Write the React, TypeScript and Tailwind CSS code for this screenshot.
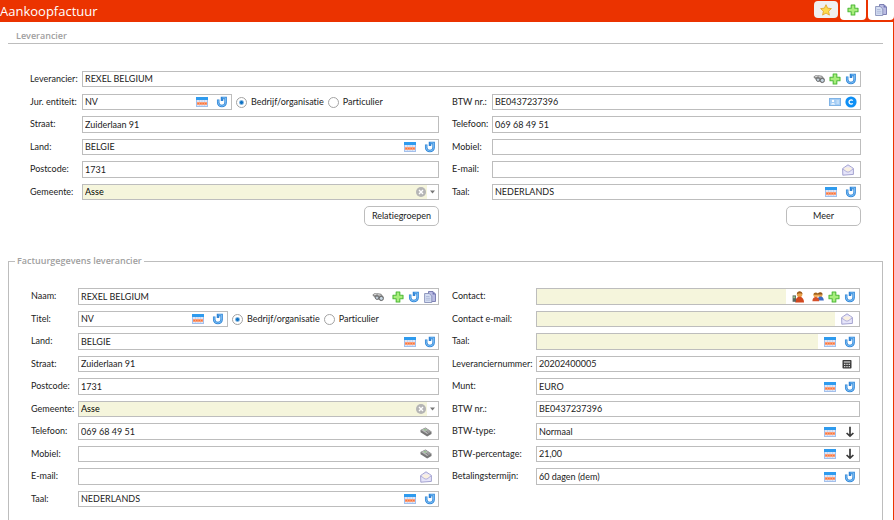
import clsx from "clsx";
import React, { ReactNode, useId } from "react";

type IconName =
  | "table"
  | "undo"
  | "plus"
  | "binoculars"
  | "card"
  | "circleC"
  | "mail"
  | "pages"
  | "phone"
  | "calculator"
  | "down"
  | "contact"
  | "people"
  | "star";

const icons: Record<IconName, ReactNode> = {
  table: (
    <>
      <rect x="0" y="1" width="12" height="10" fill="#a3c0ec" />
      <rect x="0" y="1" width="12" height="3" fill="#2f9bee" />
      <rect x="1" y="4" width="10" height="6" fill="#dbe7fa" />
      <path
        d="M3.5 4v6M6 4v6M8.5 4v6"
        stroke="#b9c9ea"
        strokeWidth="0.6"
        fill="none"
      />
      <rect x="1" y="6" width="10" height="3" fill="#fca07a" />
      <path d="M1.5 7.5h9" stroke="#f5763f" strokeDasharray="1.5 1" />
    </>
  ),
  undo: (
    <>
      <path
        d="M2.2 3.6V6.4a3.7 3.7 0 0 0 7.4 0V1.9H6V5"
        fill="none"
        stroke="#2f84d6"
        strokeWidth="2.5"
      />
      <path
        d="M2.2 4.2V6.4a3.7 3.7 0 0 0 7.4 0V1.9H6.4"
        fill="none"
        stroke="#7cc0f6"
        strokeWidth="1"
      />
    </>
  ),
  plus: (
    <path
      d="M4.2 1h3.6v3.2H11v3.6H7.8V11H4.2V7.8H1V4.2h3.2z"
      fill="#a8ee7c"
      stroke="#4fba38"
      strokeWidth="1.1"
      strokeLinejoin="round"
    />
  ),
  binoculars: (
    <>
      <path
        d="M0.3 4 2.4 2.2 6 2.2 9 2.8 11.8 6 11.4 9 9 10.2 6.8 8.8 4.6 8.8 2.6 6.6z"
        fill="#8a8a8a"
      />
      <circle cx="9.3" cy="7.4" r="2" fill="#c9d8e4" stroke="#5a5a5a" strokeWidth="0.8" />
      <circle cx="5" cy="6.7" r="1.7" fill="#c3d0da" stroke="#5a5a5a" strokeWidth="0.7" />
      <path d="M2 3.8 4.6 3.2M5.6 3.6 8.6 4.2" stroke="#e5e5e5" strokeWidth="0.9" />
    </>
  ),
  card: (
    <>
      <rect x="0.5" y="2.5" width="11" height="7" fill="#a4cdf5" stroke="#7fb3e6" />
      <circle cx="4" cy="4.9" r="1.2" fill="#fff" />
      <path d="M2 8.4c0-1.7 4-1.7 4 0z" fill="#fff" />
      <path d="M7.5 5H10M7.5 7H10" stroke="#e3f1fd" strokeWidth="0.9" />
    </>
  ),
  circleC: (
    <>
      <circle cx="6" cy="6" r="5.6" fill="#0d8ff5" />
      <path
        d="M7.7 4.6A2.1 2.1 0 1 0 7.7 7.4"
        fill="none"
        stroke="#fff"
        strokeWidth="1.3"
      />
    </>
  ),
  mail: (
    <>
      <path
        d="M0.6 4.6 6 0.8 11.4 4.4v6L0.8 11.2z"
        fill="#e6e5fa"
        stroke="#9b9acb"
        strokeWidth="0.9"
        strokeLinejoin="round"
      />
      <path d="M2.6 3.6h6.8v2.4L6 8 2.6 6.2z" fill="#f9f0e0" />
      <path d="M0.9 5.2 5 8h2l4.1-3" fill="none" stroke="#a6a5d2" strokeWidth="0.8" />
    </>
  ),
  pages: (
    <>
      <path d="M4.5 0.5H9L11.5 3v7.5h-7z" fill="#b9bbe2" stroke="#7376ad" strokeWidth="0.9" />
      <path d="M8.6 0.5 11.5 3.4H8.6z" fill="#6f74b0" />
      <path d="M0.6 2.5H5.2L7.8 5v6.5H0.6z" fill="#d5def2" stroke="#8790b8" strokeWidth="0.9" />
      <path d="M2 5.5h3.5M2 7.3h4.4M2 9.1h4.4" stroke="#a8b4d6" strokeWidth="0.8" />
    </>
  ),
  phone: (
    <>
      <path d="M0.5 4 5.5 1.6 11.5 5.4V8L7.2 10.4 0.5 6.2z" fill="#777" />
      <path d="M0.9 4 5.4 2.1 11 5.6 7.2 8z" fill="#b9b9b9" />
      <path d="M3.4 3.6 5.4 2.9 7 3.9 5 4.8z" fill="#8fc58a" />
      <path d="M5.6 5.8 8.6 4.7M7 6.7 9.8 5.6" stroke="#6d6d6d" strokeWidth="0.7" />
    </>
  ),
  calculator: (
    <>
      <rect x="1.5" y="2" width="9" height="8.5" rx="0.8" fill="#3c3c3c" />
      <rect x="2.8" y="3.2" width="6.4" height="1.6" fill="#b5b5b5" />
      <path
        d="M3 6.4h1.4M5.3 6.4h1.4M7.6 6.4H9M3 8.6h1.4M5.3 8.6h1.4M7.6 8.6H9"
        stroke="#d8d8d8"
        strokeWidth="1.1"
      />
    </>
  ),
  down: (
    <path
      d="M6 0.8v9.4M2.6 7 6 10.2 9.4 7"
      fill="none"
      stroke="#3a3a3a"
      strokeWidth="1.7"
    />
  ),
  contact: (
    <>
      <circle cx="7.6" cy="3.4" r="2.7" fill="#e9a04a" />
      <path d="M4.8 3.2c0-4 5.8-4 5.7 0-1.6-1.4-3.2-1.4-5.7 0z" fill="#9c5a1c" />
      <path d="M3.2 11.4c0-7.6 8.8-7.6 8.8 0z" fill="#d2481e" />
      <path d="M0.6 4.4h3.4v6.4H0.6z" fill="#5c6660" />
      <path d="M1.2 5.4h2v1.8h-2z" fill="#94c98c" />
    </>
  ),
  people: (
    <>
      <circle cx="8.2" cy="3.9" r="2.3" fill="#e8a350" />
      <path d="M5.8 3.6c0-3.2 4.8-3.2 4.8 0z" fill="#8e5419" />
      <path d="M5.4 9.6c0-5.4 6.4-5.4 6.4 0z" fill="#3c6cc4" />
      <circle cx="3.8" cy="4.2" r="2.3" fill="#f0ad58" />
      <path d="M1.4 3.8c0-3.2 4.8-3.2 4.8 0z" fill="#a4631c" />
      <path d="M0.4 10.2c0-5.6 6.8-5.6 6.8 0z" fill="#d5502a" />
    </>
  ),
  star: (
    <path
      d="M6 0.7 7.6 4.2l3.8.4-2.8 2.6.8 3.9L6 9.1l-3.4 2 .8-3.9L.6 4.6l3.8-.4z"
      fill="#fddb4c"
      stroke="#e0a020"
      strokeWidth="0.8"
      strokeLinejoin="round"
    />
  ),
};

const Icon = ({ name, className }: { name: IconName; className?: string }) => (
  <svg viewBox="0 0 12 12" className={clsx("block", className ?? "size-3")}>
    {icons[name]}
  </svg>
);

const IconButton = ({ name }: { name: IconName }) => (
  <button type="button" aria-label={name} className="shrink-0">
    <Icon name={name} />
  </button>
);

interface FieldProps {
  label: string;
  labelWidth: string;
  value?: string;
  buttons?: IconName[];
  // spacing of the icons on the right side of the box
  tools?: string;
  shaded?: boolean;
}

const rowClass = "flex pb-1.5";
const labelClass = "shrink-0 leading-4 whitespace-nowrap";
const boxClass = "flex min-w-0 border border-[#bdbdbd] bg-white";
const inputClass = "min-w-0 flex-1 px-0.5 leading-3 outline-none";

const Field = ({
  label,
  labelWidth,
  value = "",
  buttons = [],
  tools = "gap-2 pr-[3px]",
  shaded,
}: FieldProps) => {
  const id = useId();
  return (
    <div className={rowClass}>
      <label htmlFor={id} className={clsx(labelClass, labelWidth)}>
        {label}
      </label>
      <div className={clsx(boxClass, "flex-1")}>
        <input
          id={id}
          defaultValue={value}
          className={clsx(inputClass, shaded && "bg-[#f5f5dc]")}
        />
        {buttons.length > 0 && (
          <div className={clsx("flex items-center pl-1.5", tools)}>
            {buttons.map((name) => (
              <IconButton key={name} name={name} />
            ))}
          </div>
        )}
      </div>
    </div>
  );
};

const CityField = ({ labelWidth }: { labelWidth: string }) => {
  const id = useId();
  return (
    <div className={rowClass}>
      <label htmlFor={id} className={clsx(labelClass, labelWidth)}>
        Gemeente:
      </label>
      <div className={clsx(boxClass, "flex-1")}>
        <select
          id={id}
          className="min-w-0 flex-1 appearance-none bg-[#f5f5dc] px-0.5 leading-3 text-black outline-none"
        >
          <option>Asse</option>
        </select>
        <button type="button" aria-label="clear" className="bg-[#f5f5dc]">
          <svg viewBox="0 0 12 12" className="block size-3">
            <circle cx="6" cy="6" r="5" fill="#b5b5b5" />
            <path d="M4 4l4 4M8 4l-4 4" stroke="#fff" strokeWidth="1.4" />
          </svg>
        </button>
        <svg viewBox="0 0 11 12" className="w-[11px] self-center">
          <path d="M3 4.5h5L5.5 7.5z" fill="#777" />
        </svg>
      </div>
    </div>
  );
};

const Radio = ({
  name,
  label,
  checked,
}: {
  name: string;
  label: string;
  checked?: boolean;
}) => (
  <label className="flex items-center gap-1 whitespace-nowrap">
    <input
      type="radio"
      name={name}
      defaultChecked={checked}
      className="size-[11px] appearance-none rounded-full border border-[#a3a3a3] bg-white checked:bg-[radial-gradient(circle,#0a6fc2_1px,#fff_3px)]"
    />
    {label}
  </label>
);

const TitleField = ({
  label,
  labelWidth,
}: {
  label: string;
  labelWidth: string;
}) => {
  const id = useId();
  return (
    <div className={rowClass}>
      <label htmlFor={id} className={clsx(labelClass, labelWidth)}>
        {label}
      </label>
      <div className={clsx(boxClass, "w-[150px] shrink-0")}>
        <input id={id} defaultValue="NV" className={inputClass} />
        <div className="flex items-center gap-2 pr-[3px]">
          <IconButton name="table" />
          <IconButton name="undo" />
        </div>
      </div>
      <div className="flex gap-1 pl-1">
        <Radio name={id} label="Bedrijf/organisatie" checked />
        <Radio name={id} label="Particulier" />
      </div>
    </div>
  );
};

const TextButton = ({ children }: { children: ReactNode }) => (
  <button
    type="button"
    className="h-5 w-[75px] rounded-[5px] border border-[#bdbdbd] bg-white whitespace-nowrap"
  >
    {children}
  </button>
);

const Header = () => (
  <header className="flex h-[22px] items-start justify-between bg-[#eb3300]">
    <h1 className="font-['Open_Sans',sans-serif] text-[13px] leading-[22px] text-white">
      Aankoopfactuur
    </h1>
    <div className="flex gap-0.5">
      <button
        type="button"
        aria-label="star"
        className="mt-px flex h-[17px] w-6 items-center justify-center rounded-[4px] bg-[#f0f0f0]"
      >
        <Icon name="star" />
      </button>
      <button
        type="button"
        aria-label="plus"
        className="flex h-5 w-[26px] items-center justify-center rounded-b-[4px] bg-white"
      >
        <Icon name="plus" />
      </button>
      <button
        type="button"
        aria-label="pages"
        className="flex h-5 w-[26px] items-center justify-center rounded-b-[4px] bg-white"
      >
        <Icon name="pages" />
      </button>
    </div>
  </header>
);

const Supplier = () => (
  <section className="px-2">
    <h2 className="mr-0.5 border-b border-[#bdbdbd] pt-1.5 pl-2 font-['Open_Sans',sans-serif] text-[9px] leading-[15px] font-semibold text-[#a0a0a0]">
      Leverancier
    </h2>
    <div className="pt-[27px] pr-6 pl-[22px]">
      <div className="mb-px *:h-[22px]">
        <Field
          label="Leverancier:"
          labelWidth="w-[52px]"
          value="REXEL BELGIUM"
          buttons={["binoculars", "plus", "undo"]}
          tools="gap-1 pr-[3px]"
        />
      </div>
      <div className="grid grid-cols-2 gap-x-[13px]">
        <div className="*:h-[22px] *:even:h-[23px]">
          <TitleField label="Jur. entiteit:" labelWidth="w-[52px]" />
          <Field label="Straat:" labelWidth="w-[52px]" value="Zuiderlaan 91" />
          <Field
            label="Land:"
            labelWidth="w-[52px]"
            value="BELGIE"
            buttons={["table", "undo"]}
            tools="gap-2 pr-0.5"
          />
          <Field label="Postcode:" labelWidth="w-[52px]" value="1731" />
          <CityField labelWidth="w-[52px]" />
        </div>
        <div className="*:h-[22px] *:even:h-[23px]">
          <Field
            label="BTW nr.:"
            labelWidth="w-10"
            value="BE0437237396"
            buttons={["card", "circleC"]}
            tools="gap-1 pr-[3px]"
          />
          <Field label="Telefoon:" labelWidth="w-10" value="069 68 49 51" />
          <Field label="Mobiel:" labelWidth="w-10" />
          <Field
            label="E-mail:"
            labelWidth="w-10"
            buttons={["mail"]}
            tools="pr-1.5"
          />
          <Field
            label="Taal:"
            labelWidth="w-10"
            value="NEDERLANDS"
            buttons={["table", "undo"]}
          />
        </div>
        <div className="flex justify-end">
          <TextButton>Relatiegroepen</TextButton>
        </div>
        <div className="flex justify-end">
          <TextButton>Meer</TextButton>
        </div>
      </div>
    </div>
  </section>
);

const InvoiceDetails = () => (
  <fieldset className="mx-2 mr-2.5 flex-1 border border-b-0 border-[#bdbdbd]">
    <legend className="ml-1.5 px-0.5 font-['Open_Sans',sans-serif] text-[9px] leading-3 font-semibold text-[#a0a0a0]">
      Factuurgegevens leverancier
    </legend>
    <div className="grid grid-cols-2 gap-x-[13px] pt-[21px] pr-[22px] pl-[22px]">
      <div className="*:h-[22px] *:odd:h-[23px]">
        <Field
          label="Naam:"
          labelWidth="w-[47px]"
          value="REXEL BELGIUM"
          buttons={["binoculars", "plus", "undo", "pages"]}
          tools="gap-1 pr-0.5 *:first:mr-1"
        />
        <TitleField label="Titel:" labelWidth="w-[47px]" />
        <Field
          label="Land:"
          labelWidth="w-[47px]"
          value="BELGIE"
          buttons={["table", "undo"]}
          tools="gap-2 pr-0.5"
        />
        <Field label="Straat:" labelWidth="w-[47px]" value="Zuiderlaan 91" />
        <Field label="Postcode:" labelWidth="w-[47px]" value="1731" />
        <CityField labelWidth="w-[47px]" />
        <Field
          label="Telefoon:"
          labelWidth="w-[47px]"
          value="069 68 49 51"
          buttons={["phone"]}
          tools="pr-1.5"
        />
        <Field
          label="Mobiel:"
          labelWidth="w-[47px]"
          buttons={["phone"]}
          tools="pr-1.5"
        />
        <Field
          label="E-mail:"
          labelWidth="w-[47px]"
          buttons={["mail"]}
          tools="pr-1.5"
        />
        <Field
          label="Taal:"
          labelWidth="w-[47px]"
          value="NEDERLANDS"
          buttons={["table", "undo"]}
          tools="gap-2 pr-0.5"
        />
      </div>
      <div className="*:h-[22px] *:odd:h-[23px]">
        <Field
          label="Contact:"
          labelWidth="w-[84px]"
          buttons={["contact", "people", "plus", "undo"]}
          tools="gap-1 pr-[3px] *:first:mr-1"
          shaded
        />
        <Field
          label="Contact e-mail:"
          labelWidth="w-[84px]"
          buttons={["mail"]}
          tools="pr-1.5"
          shaded
        />
        <Field
          label="Taal:"
          labelWidth="w-[84px]"
          buttons={["table", "undo"]}
          shaded
        />
        <Field
          label="Leveranciernummer:"
          labelWidth="w-[84px]"
          value="20202400005"
          buttons={["calculator"]}
          tools="pr-1.5"
        />
        <Field
          label="Munt:"
          labelWidth="w-[84px]"
          value="EURO"
          buttons={["table", "undo"]}
        />
        <Field label="BTW nr.:" labelWidth="w-[84px]" value="BE0437237396" />
        <Field
          label="BTW-type:"
          labelWidth="w-[84px]"
          value="Normaal"
          buttons={["table", "down"]}
        />
        <Field
          label="BTW-percentage:"
          labelWidth="w-[84px]"
          value="21,00"
          buttons={["table", "down"]}
        />
        <Field
          label="Betalingstermijn:"
          labelWidth="w-[84px]"
          value="60 dagen (dem)"
          buttons={["table", "undo"]}
        />
      </div>
    </div>
  </fieldset>
);

const App = () => {
  return (
    <main className="flex min-h-screen flex-col bg-white font-[Lato,'Open_Sans',sans-serif] text-[9px] text-[#222] [font-variant-ligatures:none]">
      <Header />
      <div className="flex flex-1 flex-col gap-[29px] border-r border-[#eb3300]">
        <Supplier />
        <InvoiceDetails />
      </div>
    </main>
  );
};

export default App;
